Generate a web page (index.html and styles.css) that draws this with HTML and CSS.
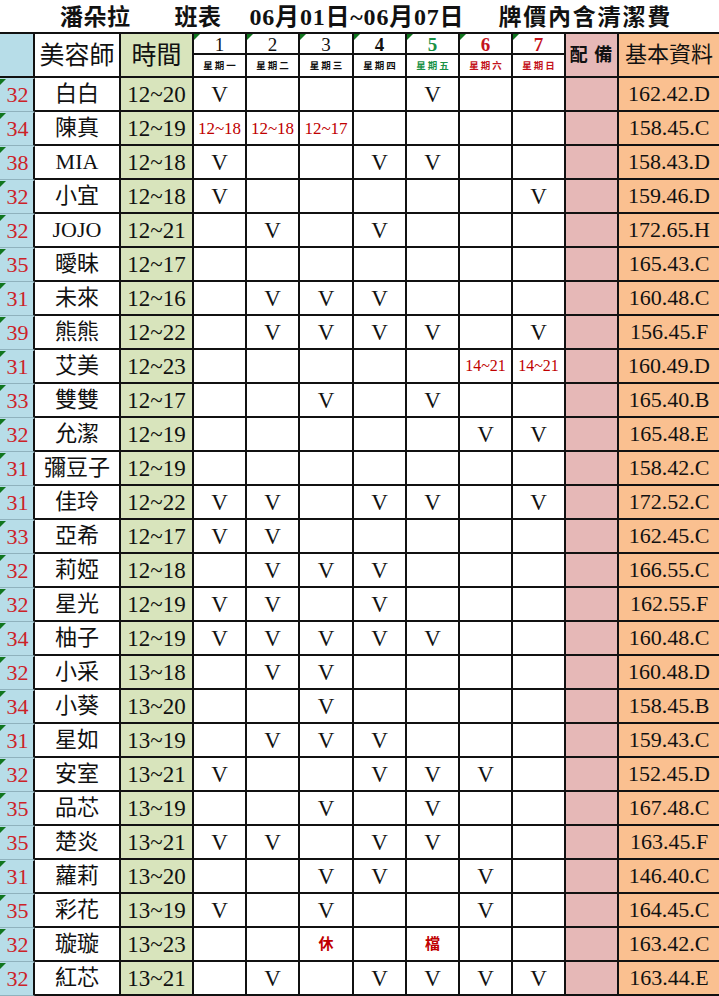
FILE: index.html
```html
<!DOCTYPE html>
<html lang="zh-Hant">
<head>
<meta charset="utf-8">
<title>潘朵拉 班表</title>
<link rel="stylesheet" href="styles.css">
</head>
<body>
<div class="sheet">
  <div class="title"><span class="t1">潘朵拉</span><span class="t2">班表</span><span class="t3">06月01日~06月07日</span><span class="t4">牌價內含清潔費</span></div>

  <div class="hn"></div>
  <div class="hname">美容師</div>
  <div class="htime">時間</div>
  <div class="dn">1</div>
  <div class="dn">2</div>
  <div class="dn">3</div>
  <div class="dn bold">4</div>
  <div class="dn bold green">5</div>
  <div class="dn bold red">6</div>
  <div class="dn bold red">7</div>
  <div class="hp">配 備</div>
  <div class="hb">基本資料</div>
  <div class="wk">星期一</div>
  <div class="wk">星期二</div>
  <div class="wk">星期三</div>
  <div class="wk">星期四</div>
  <div class="wk green">星期五</div>
  <div class="wk red">星期六</div>
  <div class="wk red">星期日</div>

  <div class="n">32</div><div class="nm">白白</div><div class="t">12~20</div><div class="d">V</div><div class="d"></div><div class="d"></div><div class="d"></div><div class="d">V</div><div class="d"></div><div class="d"></div><div class="p"></div><div class="b">162.42.D</div>
  <div class="n">34</div><div class="nm">陳真</div><div class="t">12~19</div><div class="d r">12~18</div><div class="d r">12~18</div><div class="d r">12~17</div><div class="d"></div><div class="d"></div><div class="d"></div><div class="d"></div><div class="p"></div><div class="b">158.45.C</div>
  <div class="n">38</div><div class="nm">MIA</div><div class="t">12~18</div><div class="d">V</div><div class="d"></div><div class="d"></div><div class="d">V</div><div class="d">V</div><div class="d"></div><div class="d"></div><div class="p"></div><div class="b">158.43.D</div>
  <div class="n">32</div><div class="nm">小宜</div><div class="t">12~18</div><div class="d">V</div><div class="d"></div><div class="d"></div><div class="d"></div><div class="d"></div><div class="d"></div><div class="d">V</div><div class="p"></div><div class="b">159.46.D</div>
  <div class="n">32</div><div class="nm">JOJO</div><div class="t">12~21</div><div class="d"></div><div class="d">V</div><div class="d"></div><div class="d">V</div><div class="d"></div><div class="d"></div><div class="d"></div><div class="p"></div><div class="b">172.65.H</div>
  <div class="n">35</div><div class="nm">曖昧</div><div class="t">12~17</div><div class="d"></div><div class="d"></div><div class="d"></div><div class="d"></div><div class="d"></div><div class="d"></div><div class="d"></div><div class="p"></div><div class="b">165.43.C</div>
  <div class="n">31</div><div class="nm">未來</div><div class="t">12~16</div><div class="d"></div><div class="d">V</div><div class="d">V</div><div class="d">V</div><div class="d"></div><div class="d"></div><div class="d"></div><div class="p"></div><div class="b">160.48.C</div>
  <div class="n">39</div><div class="nm">熊熊</div><div class="t">12~22</div><div class="d"></div><div class="d">V</div><div class="d">V</div><div class="d">V</div><div class="d">V</div><div class="d"></div><div class="d">V</div><div class="p"></div><div class="b">156.45.F</div>
  <div class="n">31</div><div class="nm">艾美</div><div class="t">12~23</div><div class="d"></div><div class="d"></div><div class="d"></div><div class="d"></div><div class="d"></div><div class="d r sm">14~21</div><div class="d r sm">14~21</div><div class="p"></div><div class="b">160.49.D</div>
  <div class="n">33</div><div class="nm">雙雙</div><div class="t">12~17</div><div class="d"></div><div class="d"></div><div class="d">V</div><div class="d"></div><div class="d">V</div><div class="d"></div><div class="d"></div><div class="p"></div><div class="b">165.40.B</div>
  <div class="n">32</div><div class="nm">允潔</div><div class="t">12~19</div><div class="d"></div><div class="d"></div><div class="d"></div><div class="d"></div><div class="d"></div><div class="d">V</div><div class="d">V</div><div class="p"></div><div class="b">165.48.E</div>
  <div class="n">31</div><div class="nm">彌豆子</div><div class="t">12~19</div><div class="d"></div><div class="d"></div><div class="d"></div><div class="d"></div><div class="d"></div><div class="d"></div><div class="d"></div><div class="p"></div><div class="b">158.42.C</div>
  <div class="n">31</div><div class="nm">佳玲</div><div class="t">12~22</div><div class="d">V</div><div class="d">V</div><div class="d"></div><div class="d">V</div><div class="d">V</div><div class="d"></div><div class="d">V</div><div class="p"></div><div class="b">172.52.C</div>
  <div class="n">33</div><div class="nm">亞希</div><div class="t">12~17</div><div class="d">V</div><div class="d">V</div><div class="d"></div><div class="d"></div><div class="d"></div><div class="d"></div><div class="d"></div><div class="p"></div><div class="b">162.45.C</div>
  <div class="n">32</div><div class="nm">莉婭</div><div class="t">12~18</div><div class="d"></div><div class="d">V</div><div class="d">V</div><div class="d">V</div><div class="d"></div><div class="d"></div><div class="d"></div><div class="p"></div><div class="b">166.55.C</div>
  <div class="n">32</div><div class="nm">星光</div><div class="t">12~19</div><div class="d">V</div><div class="d">V</div><div class="d"></div><div class="d">V</div><div class="d"></div><div class="d"></div><div class="d"></div><div class="p"></div><div class="b">162.55.F</div>
  <div class="n">34</div><div class="nm">柚子</div><div class="t">12~19</div><div class="d">V</div><div class="d">V</div><div class="d">V</div><div class="d">V</div><div class="d">V</div><div class="d"></div><div class="d"></div><div class="p"></div><div class="b">160.48.C</div>
  <div class="n">32</div><div class="nm">小采</div><div class="t">13~18</div><div class="d"></div><div class="d">V</div><div class="d">V</div><div class="d"></div><div class="d"></div><div class="d"></div><div class="d"></div><div class="p"></div><div class="b">160.48.D</div>
  <div class="n">34</div><div class="nm">小葵</div><div class="t">13~20</div><div class="d"></div><div class="d"></div><div class="d">V</div><div class="d"></div><div class="d"></div><div class="d"></div><div class="d"></div><div class="p"></div><div class="b">158.45.B</div>
  <div class="n">31</div><div class="nm">星如</div><div class="t">13~19</div><div class="d"></div><div class="d">V</div><div class="d">V</div><div class="d">V</div><div class="d"></div><div class="d"></div><div class="d"></div><div class="p"></div><div class="b">159.43.C</div>
  <div class="n">32</div><div class="nm">安室</div><div class="t">13~21</div><div class="d">V</div><div class="d"></div><div class="d"></div><div class="d">V</div><div class="d">V</div><div class="d">V</div><div class="d"></div><div class="p"></div><div class="b">152.45.D</div>
  <div class="n">35</div><div class="nm">品芯</div><div class="t">13~19</div><div class="d"></div><div class="d"></div><div class="d">V</div><div class="d"></div><div class="d">V</div><div class="d"></div><div class="d"></div><div class="p"></div><div class="b">167.48.C</div>
  <div class="n">35</div><div class="nm">楚炎</div><div class="t">13~21</div><div class="d">V</div><div class="d">V</div><div class="d"></div><div class="d">V</div><div class="d">V</div><div class="d"></div><div class="d"></div><div class="p"></div><div class="b">163.45.F</div>
  <div class="n">31</div><div class="nm">蘿莉</div><div class="t">13~20</div><div class="d"></div><div class="d"></div><div class="d">V</div><div class="d">V</div><div class="d"></div><div class="d">V</div><div class="d"></div><div class="p"></div><div class="b">146.40.C</div>
  <div class="n">35</div><div class="nm">彩花</div><div class="t">13~19</div><div class="d">V</div><div class="d"></div><div class="d">V</div><div class="d"></div><div class="d"></div><div class="d">V</div><div class="d"></div><div class="p"></div><div class="b">164.45.C</div>
  <div class="n">32</div><div class="nm">璇璇</div><div class="t">13~23</div><div class="d"></div><div class="d"></div><div class="d rb">休</div><div class="d"></div><div class="d rb">檔</div><div class="d"></div><div class="d"></div><div class="p"></div><div class="b">163.42.C</div>
  <div class="n">32</div><div class="nm">紅芯</div><div class="t">13~21</div><div class="d"></div><div class="d">V</div><div class="d"></div><div class="d">V</div><div class="d">V</div><div class="d">V</div><div class="d">V</div><div class="p"></div><div class="b">163.44.E</div>
</div>
</body>
</html>
```

FILE: styles.css
```css
* { box-sizing: border-box; }

body {
  margin: 0;
  background: #fff;
  color: #111;
  font-family: "Liberation Serif", "Noto Sans CJK TC", serif;
}

.sheet {
  display: grid;
  width: 719px;
  grid-template-columns: 35px 86px 73px 53px 53px 54px 53px 53px 53px 53px 53px 100px;
  grid-template-rows: 34px 21px 23px repeat(27, 34px);
}

.sheet > div {
  position: relative;
  display: flex;
  align-items: center;
  justify-content: center;
  white-space: nowrap;
  border-right: 2px solid #111;
  border-bottom: 2px solid #111;
  line-height: 1;
}

.sheet > .title {
  grid-column: 1 / -1;
  border-right: none;
  justify-content: flex-start;
  padding-left: 60px;
  padding-top: 2px;
  font-weight: 700;
  font-size: 23px;
  color: #111;
}
.t1 { letter-spacing: 0.5px; }
.t2 { margin-left: 44px; letter-spacing: 0.5px; }
.t3 { margin-left: 28px; font-size: 24px; letter-spacing: 0.8px; }
.t4 { margin-left: 34px; letter-spacing: 1.8px; }

.sheet > .hn {
  grid-row: span 2;
  background: #b7dde8;
}
.hname {
  grid-row: span 2;
  font-size: 25px;
}
.htime {
  grid-row: span 2;
  background: #d8e4bc;
  font-size: 25px;
}
.sheet > .hp {
  grid-row: span 2;
  background: #e6b8b7;
  font-size: 18px;
  font-weight: 700;
  letter-spacing: 1px;
}
.sheet > .hb {
  grid-row: span 2;
  background: #fac090;
  font-size: 22px;
  border-right: none;
}

.dn {
  font-size: 19px;
  padding-top: 2px;
}
.dn::before,
.sheet > .n::before {
  content: "";
  position: absolute;
  top: 0;
  left: 0;
  border-top: 6px solid #11761f;
  border-right: 6px solid transparent;
}
.bold { font-weight: 700; }
.green { color: #1a9146; }
.red { color: #c4141c; }

.wk {
  font-size: 9.5px;
  font-weight: 700;
  letter-spacing: 2px;
  padding-top: 2px;
  padding-left: 2px;
}

.sheet > .n {
  background: #b7dde8;
  color: #cc2228;
  font-size: 22px;
  border-bottom: 1px solid #8fb2bd;
  border-top: 1px solid #b7dde8;
  padding-left: 2px;
}
.nm { font-size: 22px; }
.t {
  background: #d8e4bc;
  font-size: 23px;
}
.d { font-size: 23px; }
.d.r {
  color: #c00000;
  font-size: 17px;
}
.d.r.sm { font-size: 16px; }
.d.rb {
  color: #c00000;
  font-size: 15px;
  font-weight: 700;
}
.p { background: #e6b8b7; }
.sheet > .b {
  background: #fac090;
  font-size: 22px;
  border-right: none;
}
```
